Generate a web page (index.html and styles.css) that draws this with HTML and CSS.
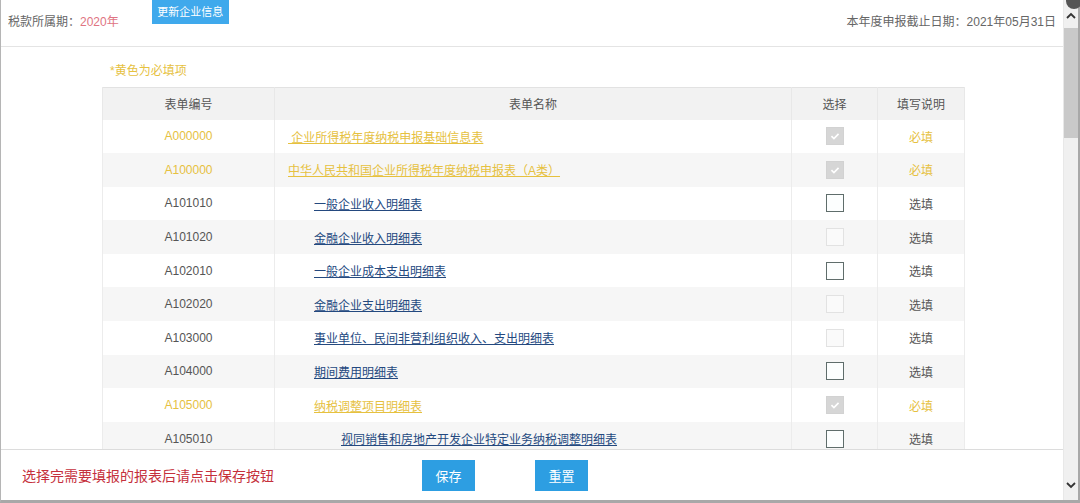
FILE: index.html
```html
<!DOCTYPE html>
<html lang="zh-CN">
<head>
    <meta charset="UTF-8">
    <meta name="viewport" content="width=device-width, initial-scale=1.0">
    <title>报表选择</title>
    <link rel="stylesheet" href="styles.css">
</head>
<body>
    <div class="window">
        <div class="main">
            <div class="topbar">
                <div class="period">税款所属期：<span class="year">2020年</span></div>
                <button class="update-btn">更新企业信息</button>
                <div class="deadline">本年度申报截止日期：2021年05月31日</div>
            </div>
            <div class="content">
                <div class="hint">*黄色为必填项</div>
                <table class="forms">
                    <colgroup>
                        <col class="c-code">
                        <col class="c-name">
                        <col class="c-sel">
                        <col class="c-note">
                    </colgroup>
                    <thead>
                        <tr>
                            <th>表单编号</th>
                            <th>表单名称</th>
                            <th>选择</th>
                            <th>填写说明</th>
                        </tr>
                    </thead>
                    <tbody>
                        <tr class="req">
                            <td class="code">A000000</td>
                            <td class="name lv1"><a href="#">&nbsp;企业所得税年度纳税申报基础信息表</a></td>
                            <td class="sel"><span class="box checked"><svg viewBox="0 0 18 18"><path d="M5 9.2l2.8 2.8L13 6.6" fill="none" stroke="#fff" stroke-width="1.8"/></svg></span></td>
                            <td class="note">必填</td>
                        </tr>
                        <tr class="req">
                            <td class="code">A100000</td>
                            <td class="name lv1"><a href="#">中华人民共和国企业所得税年度纳税申报表（A类）</a></td>
                            <td class="sel"><span class="box checked"><svg viewBox="0 0 18 18"><path d="M5 9.2l2.8 2.8L13 6.6" fill="none" stroke="#fff" stroke-width="1.8"/></svg></span></td>
                            <td class="note">必填</td>
                        </tr>
                        <tr>
                            <td class="code">A101010</td>
                            <td class="name lv2"><a href="#">一般企业收入明细表</a></td>
                            <td class="sel"><span class="box"></span></td>
                            <td class="note">选填</td>
                        </tr>
                        <tr>
                            <td class="code">A101020</td>
                            <td class="name lv2"><a href="#">金融企业收入明细表</a></td>
                            <td class="sel"><span class="box off"></span></td>
                            <td class="note">选填</td>
                        </tr>
                        <tr>
                            <td class="code">A102010</td>
                            <td class="name lv2"><a href="#">一般企业成本支出明细表</a></td>
                            <td class="sel"><span class="box"></span></td>
                            <td class="note">选填</td>
                        </tr>
                        <tr>
                            <td class="code">A102020</td>
                            <td class="name lv2"><a href="#">金融企业支出明细表</a></td>
                            <td class="sel"><span class="box off"></span></td>
                            <td class="note">选填</td>
                        </tr>
                        <tr>
                            <td class="code">A103000</td>
                            <td class="name lv2"><a href="#">事业单位、民间非营利组织收入、支出明细表</a></td>
                            <td class="sel"><span class="box off"></span></td>
                            <td class="note">选填</td>
                        </tr>
                        <tr>
                            <td class="code">A104000</td>
                            <td class="name lv2"><a href="#">期间费用明细表</a></td>
                            <td class="sel"><span class="box"></span></td>
                            <td class="note">选填</td>
                        </tr>
                        <tr class="req">
                            <td class="code">A105000</td>
                            <td class="name lv2"><a href="#">纳税调整项目明细表</a></td>
                            <td class="sel"><span class="box checked"><svg viewBox="0 0 18 18"><path d="M5 9.2l2.8 2.8L13 6.6" fill="none" stroke="#fff" stroke-width="1.8"/></svg></span></td>
                            <td class="note">必填</td>
                        </tr>
                        <tr>
                            <td class="code">A105010</td>
                            <td class="name lv3"><a href="#">视同销售和房地产开发企业特定业务纳税调整明细表</a></td>
                            <td class="sel"><span class="box"></span></td>
                            <td class="note">选填</td>
                        </tr>
                    </tbody>
                </table>
            </div>
            <div class="footer">
                <div class="tip">选择完需要填报的报表后请点击保存按钮</div>
                <button class="btn save">保存</button>
                <button class="btn reset">重置</button>
            </div>
        </div>
        <div class="scrollbar">
            <div class="arrow up"><svg viewBox="0 0 10 8"><path d="M1 6l4-4 4 4" fill="none" stroke="#333" stroke-width="1.8"/></svg></div>
            <div class="thumb"></div>
            <div class="track"></div>
            <div class="arrow down"><svg viewBox="0 0 10 8"><path d="M1 2l4 4 4-4" fill="none" stroke="#333" stroke-width="1.8"/></svg></div>
        </div>
        <div class="close"></div>
    </div>
</body>
</html>
```

FILE: styles.css
```css
* {
    box-sizing: border-box;
}
body {
    margin: 0;
    width: 1080px;
    height: 503px;
    overflow: hidden;
    background: #fff;
    font-family: "Liberation Sans", "Noto Sans CJK SC", sans-serif;
    font-size: 12px;
    color: #555;
}
.window {
    position: relative;
    display: flex;
    height: 503px;
    border-left: 1px solid #b5b5b5;
    border-bottom: 3px solid #a8a8a8;
}
.main {
    flex: 1;
    display: flex;
    flex-direction: column;
    min-width: 0;
}
.topbar {
    display: flex;
    align-items: flex-start;
    height: 47px;
    border-bottom: 1px solid #e4e4e4;
    padding: 0 7px 0 7px;
}
.period {
    padding-top: 15px;
    line-height: 14px;
    color: #666;
}
.year {
    color: #e07482;
}
.update-btn {
    margin-left: 33px;
    width: 77px;
    height: 24px;
    border: none;
    background: #3fa9ec;
    color: #fff;
    font-family: inherit;
    font-size: 11px;
    padding: 0;
    padding-bottom: 2px;
}
.deadline {
    margin-left: auto;
    padding-top: 15px;
    line-height: 14px;
    color: #666;
}
.content {
    flex: 1;
    overflow: hidden;
    padding-left: 101px;
}
.hint {
    color: #e6c13f;
    padding: 17px 0 0 8px;
    line-height: 14px;
    height: 40px;
}
.forms {
    border-collapse: collapse;
    table-layout: fixed;
    width: 862px;
    border-top: 1px solid #e2e2e2;
}
.c-code { width: 172px; }
.c-name { width: 517px; }
.c-sel { width: 86px; }
.c-note { width: 87px; }
.forms th {
    height: 32px;
    background: #f2f2f2;
    font-weight: normal;
    color: #555;
    border-left: 1px solid #e8e8e8;
    border-right: 1px solid #e8e8e8;
    padding: 0;
}
.forms td {
    height: 33.6px;
    padding: 0;
    border-left: 1px solid #ececec;
    border-right: 1px solid #ececec;
    text-align: center;
}
.forms tbody tr:nth-child(odd) {
    background: #fff;
}
.forms tbody tr:nth-child(even) {
    background: #f6f6f6;
}
.forms td.name {
    text-align: left;
}
.name a {
    color: #24497f;
    text-decoration: underline;
}
.forms td.lv1 { padding-left: 13px; }
.forms td.lv2 { padding-left: 39px; }
.forms td.lv3 { padding-left: 66px; }
.req .code,
.req .note,
.req .name a {
    color: #e6c13f;
}
.box {
    display: inline-block;
    width: 18px;
    height: 18px;
    vertical-align: middle;
    border: 1px solid #5f6d6b;
    background: #fcfefe;
}
.box.off {
    border-color: #e2e2e2;
    background: #fafafa;
}
.box.checked {
    border-color: #d2d2d2;
    background: #d6d6d6;
}
.box svg {
    display: block;
    width: 16px;
    height: 16px;
}
.footer {
    display: flex;
    align-items: center;
    height: 51px;
    border-top: 1px solid #dcdcdc;
    padding-left: 21px;
}
.tip {
    font-size: 14px;
    color: #c5303c;
    width: 400px;
}
.btn {
    width: 53px;
    height: 31px;
    border: none;
    background: #2d9ee2;
    color: #fff;
    font-family: inherit;
    font-size: 13px;
    padding: 0;
}
.reset {
    margin-left: 60px;
}
.scrollbar {
    width: 17px;
    display: flex;
    flex-direction: column;
    background: #f0f0f0;
    border-right: 2px solid #a8a8a8;
    border-left: 1px solid #e8e8e8;
}
.arrow {
    height: 28px;
    display: flex;
    justify-content: center;
}
.arrow.up {
    align-items: flex-end;
    padding-bottom: 8px;
}
.arrow.down {
    align-items: center;
    height: 30px;
}
.arrow svg {
    width: 10px;
    height: 8px;
}
.thumb {
    height: 110px;
    background: #c9c9c9;
}
.track {
    flex: 1;
}
.close {
    position: absolute;
    top: -7px;
    right: -2px;
    width: 16px;
    height: 16px;
    border-radius: 50%;
    background: #555;
}
```
